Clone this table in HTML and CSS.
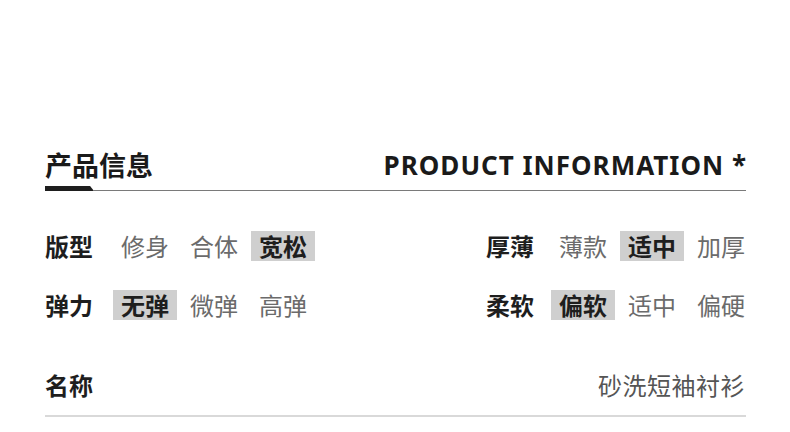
FILE: index.html
```html
<!DOCTYPE html>
<html lang="zh">
<head>
<meta charset="utf-8">
<link rel="stylesheet" href="styles.css">
</head>
<body>
<div class="page">
  <div class="head">
    <div class="head-cn">产品信息</div>
    <div class="head-en">PRODUCT INFORMATION *</div>
  </div>
  <div class="rule"><span class="rule-bar"></span><span class="rule-line"></span></div>

  <div class="grid">
    <div class="group">
      <span class="label">版型</span>
      <span class="opt">修身</span>
      <span class="opt">合体</span>
      <span class="opt on">宽松</span>
    </div>
    <div class="group">
      <span class="label label-r">厚薄</span>
      <span class="opt">薄款</span>
      <span class="opt on">适中</span>
      <span class="opt">加厚</span>
    </div>
    <div class="group">
      <span class="label">弹力</span>
      <span class="opt on">无弹</span>
      <span class="opt">微弹</span>
      <span class="opt">高弹</span>
    </div>
    <div class="group">
      <span class="label label-r">柔软</span>
      <span class="opt on">偏软</span>
      <span class="opt">适中</span>
      <span class="opt">偏硬</span>
    </div>
  </div>

  <div class="name-row">
    <span class="label">名称</span>
    <span class="name-val">砂洗短袖衬衫</span>
  </div>
  <div class="bottom-line"></div>
</div>
</body>
</html>
```

FILE: styles.css
```css
html, body {
  margin: 0;
  padding: 0;
  background: #ffffff;
}
body {
  font-family: "Noto Sans CJK SC", "Noto Sans", sans-serif;
  color: #1e1e1e;
}
.page {
  width: 701px;
  padding: 147px 0 0 45px;
}
.head {
  display: flex;
  justify-content: space-between;
  align-items: center;
  height: 36px;
}
.head-cn {
  font-size: 27px;
  font-weight: 700;
  line-height: 36px;
  color: #1a1a1a;
}
.head-en {
  font-family: "Noto Sans", sans-serif;
  font-size: 26px;
  font-weight: 700;
  letter-spacing: 1px;
  line-height: 36px;
  color: #1a1a1a;
  margin-right: -1px;
  white-space: nowrap;
}
.rule {
  display: flex;
  align-items: flex-end;
  height: 6px;
  margin-top: 2px;
}
.rule-bar {
  width: 49px;
  height: 5px;
  background: #1e1e1e;
  clip-path: polygon(0 0, 92% 0, 100% 100%, 0 100%);
}
.rule-line {
  flex: 1;
  height: 1.5px;
  background: #7a7a7a;
}
.grid {
  display: grid;
  grid-template-columns: 441px 260px;
  row-gap: 29px;
  margin-top: 40px;
}
.group {
  display: flex;
  align-items: center;
  height: 30px;
  white-space: nowrap;
}
.label {
  flex-shrink: 0;
  font-size: 24px;
  font-weight: 700;
  line-height: 30px;
  color: #1e1e1e;
  margin-right: 20px;
}
.label-r {
  margin-right: 17px;
}
.opt {
  flex-shrink: 0;
  font-size: 24px;
  line-height: 30px;
  padding: 0 8px;
  margin-right: 5px;
  color: #6b6b6b;
}
.opt.on {
  background: #cfcfcf;
  color: #1e1e1e;
  font-weight: 700;
}
.name-row {
  display: flex;
  justify-content: space-between;
  align-items: center;
  height: 30px;
  margin-top: 50px;
}
.name-row .label {
  margin-right: 0;
}
.name-val {
  font-size: 24px;
  line-height: 30px;
  color: #555555;
  margin-right: 1px;
  letter-spacing: 0.5px;
}
.bottom-line {
  height: 2px;
  background: #d9d9d9;
  margin-top: 15px;
}
```
